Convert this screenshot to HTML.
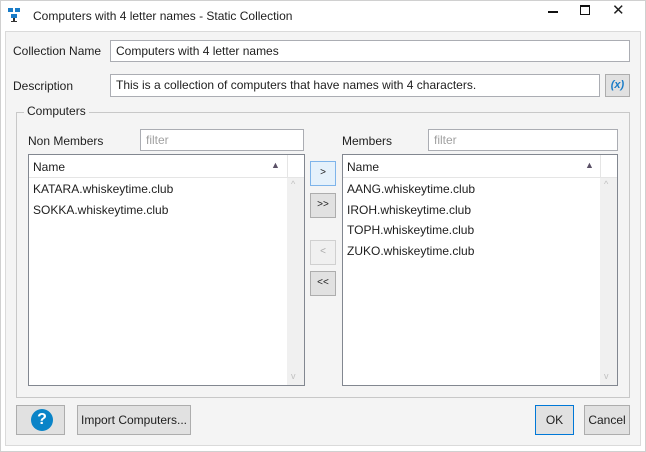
<!DOCTYPE html>
<html><head><style>
*{box-sizing:border-box;margin:0;padding:0}
body{width:646px;height:452px;background:#fff;font-family:"Liberation Sans",sans-serif;font-size:12px;color:#1e1e1e;position:relative;overflow:hidden}
.a{position:absolute}
.inp{position:absolute;background:#fff;border:1px solid #abadb3;padding:3px 5px;white-space:nowrap}
.btn{position:absolute;background:#e1e1e1;border:1px solid #adadad;text-align:center}
.list{position:absolute;background:#fff;border:1px solid #828790}
.ph{color:#a0a0a0}
</style></head><body>
<div style="position:absolute;left:0;top:0;width:646px;height:452px;border:1px solid #d0d0d0"></div>
<svg class="a" style="left:7px;top:7px" width="14" height="16" viewBox="0 0 14 16"><rect x="1" y="1" width="5" height="4" fill="#1a7cc7"/><rect x="8" y="1" width="5" height="4" fill="#1a7cc7"/><rect x="4" y="7" width="6" height="4" fill="#1a7cc7"/><rect x="6" y="11" width="2" height="3" fill="#333"/><rect x="4" y="14" width="6" height="1" fill="#333"/></svg>
<div class="a" style="left:33px;top:9px;font-size:12px">Computers with 4 letter names - Static Collection</div>
<div class="a" style="left:548px;top:11px;width:10px;height:1.5px;background:#111"></div>
<div class="a" style="left:580px;top:5px;width:10px;height:10px;border:1px solid #111;border-top-width:2px"></div>
<div class="a" style="left:612px;top:1px;font-size:15px">✕</div>
<div class="a" style="left:5px;top:31px;width:636px;height:415px;background:#f4f4f4;border:1px solid #dadada"></div>
<div class="a" style="left:13px;top:44px">Collection Name</div>
<div class="inp" style="left:110px;top:40px;width:520px;height:22px">Computers with 4 letter names</div>
<div class="a" style="left:13px;top:79px">Description</div>
<div class="inp" style="left:110px;top:74px;width:490px;height:23px">This is a collection of computers that have names with 4 characters.</div>
<div class="btn" style="left:605px;top:74px;width:25px;height:23px;color:#1a7cc7;font-weight:bold;font-style:italic;font-size:11px;line-height:20px">(x)</div>
<div class="a" style="left:16px;top:112px;width:614px;height:286px;border:1px solid #c8c8c8"></div>
<div class="a" style="left:24px;top:104px;background:#f4f4f4;padding:0 3px">Computers</div>
<div class="a" style="left:28px;top:134px">Non Members</div>
<div class="inp ph" style="left:140px;top:129px;width:164px;height:22px">filter</div>
<div class="a" style="left:342px;top:134px">Members</div>
<div class="inp ph" style="left:428px;top:129px;width:190px;height:22px">filter</div>

<div class="list" style="left:28px;top:154px;width:277px;height:232px">
 <div class="a" style="left:0;top:0;width:275px;height:23px;border-bottom:1px solid #e5e5e5"></div>
 <div class="a" style="left:258px;top:0;width:1px;height:23px;background:#e5e5e5"></div>
 <div class="a" style="left:4px;top:5px">Name</div>
 <div class="a" style="left:242px;top:5px;font-size:9px;color:#5a5066">▲</div>
 <div class="a" style="left:258px;top:23px;width:17px;height:207px;background:#f0f0f0"></div>
 <div class="a" style="left:262px;top:24px;font-size:9px;color:#c0c0c0">^</div>
 <div class="a" style="left:262px;top:216px;font-size:9px;color:#c0c0c0">v</div>
 <div class="a" style="left:4px;top:27px">KATARA.whiskeytime.club</div>
 <div class="a" style="left:4px;top:48px">SOKKA.whiskeytime.club</div>
</div>
<div class="list" style="left:342px;top:154px;width:276px;height:232px">
 <div class="a" style="left:0;top:0;width:274px;height:23px;border-bottom:1px solid #e5e5e5"></div>
 <div class="a" style="left:257px;top:0;width:1px;height:23px;background:#e5e5e5"></div>
 <div class="a" style="left:4px;top:5px">Name</div>
 <div class="a" style="left:242px;top:5px;font-size:9px;color:#5a5066">▲</div>
 <div class="a" style="left:257px;top:23px;width:17px;height:207px;background:#f0f0f0"></div>
 <div class="a" style="left:261px;top:24px;font-size:9px;color:#c0c0c0">^</div>
 <div class="a" style="left:261px;top:216px;font-size:9px;color:#c0c0c0">v</div>
 <div class="a" style="left:4px;top:27px">AANG.whiskeytime.club</div>
 <div class="a" style="left:4px;top:48px">IROH.whiskeytime.club</div>
 <div class="a" style="left:4px;top:68px">TOPH.whiskeytime.club</div>
 <div class="a" style="left:4px;top:89px">ZUKO.whiskeytime.club</div>
</div>
<div class="btn" style="left:310px;top:161px;width:26px;height:25px;border-color:#7eb4ea;background:#e5f1fb;font-size:10px;line-height:22px">&gt;</div>
<div class="btn" style="left:310px;top:193px;width:26px;height:25px;font-size:10px;line-height:22px">&gt;&gt;</div>
<div class="btn" style="left:310px;top:240px;width:26px;height:25px;background:#f0f0f0;border-color:#d0d0d0;color:#aaa;font-size:10px;line-height:22px">&lt;</div>
<div class="btn" style="left:310px;top:271px;width:26px;height:25px;font-size:10px;line-height:22px">&lt;&lt;</div>

<div class="btn" style="left:16px;top:405px;width:49px;height:30px"><div class="a" style="left:14px;top:3px;width:22px;height:22px;border-radius:50%;background:#0a84c8;color:#fff;font-weight:bold;font-size:16px;line-height:22px">?</div></div>
<div class="btn" style="left:77px;top:405px;width:114px;height:30px;line-height:28px">Import Computers...</div>
<div class="btn" style="left:535px;top:405px;width:39px;height:30px;border-color:#0078d7;line-height:28px">OK</div>
<div class="btn" style="left:584px;top:405px;width:46px;height:30px;line-height:28px">Cancel</div>
</body></html>
